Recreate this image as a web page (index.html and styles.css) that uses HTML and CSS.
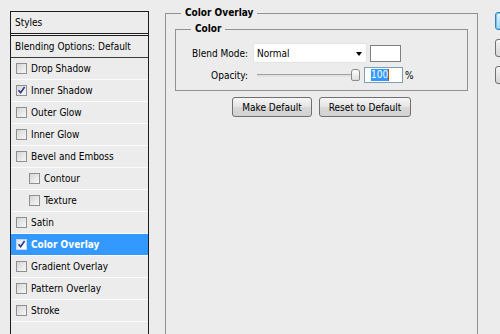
FILE: index.html
```html
<!DOCTYPE html>
<html>
<head>
<meta charset="utf-8">
<link rel="stylesheet" href="styles.css">
</head>
<body>
<div class="dialog">
  <div class="styles-panel">
    <div class="row head">Styles</div>
    <div class="row blend">Blending Options: Default</div>
    <div class="row"><span class="cb"></span><span class="lbl">Drop Shadow</span></div>
    <div class="row"><span class="cb checked"><svg viewBox="0 0 9 9" width="9" height="9"><path d="M1.5 4.2 L3.6 6.6 L7.6 1" fill="none" stroke="#2b3a8c" stroke-width="1.6"/></svg></span><span class="lbl">Inner Shadow</span></div>
    <div class="row"><span class="cb"></span><span class="lbl">Outer Glow</span></div>
    <div class="row"><span class="cb"></span><span class="lbl">Inner Glow</span></div>
    <div class="row"><span class="cb"></span><span class="lbl">Bevel and Emboss</span></div>
    <div class="row sub"><span class="cb"></span><span class="lbl">Contour</span></div>
    <div class="row sub"><span class="cb"></span><span class="lbl">Texture</span></div>
    <div class="row"><span class="cb"></span><span class="lbl">Satin</span></div>
    <div class="row active"><span class="cb checked"><svg viewBox="0 0 9 9" width="9" height="9"><path d="M1.5 4.2 L3.6 6.6 L7.6 1" fill="none" stroke="#2b3a8c" stroke-width="1.6"/></svg></span><span class="lbl">Color Overlay</span></div>
    <div class="row"><span class="cb"></span><span class="lbl">Gradient Overlay</span></div>
    <div class="row"><span class="cb"></span><span class="lbl">Pattern Overlay</span></div>
    <div class="row"><span class="cb"></span><span class="lbl">Stroke</span></div>
    <div class="row empty"></div>
  </div>

  <div class="main">
    <fieldset class="group outer">
      <legend>Color Overlay</legend>
      <fieldset class="group inner">
        <legend>Color</legend>
        <div class="field first">
          <label class="flabel">Blend Mode:</label>
          <div class="select"><span>Normal</span><span class="arrow"></span></div>
          <div class="swatch"></div>
        </div>
        <div class="field second">
          <label class="flabel">Opacity:</label>
          <div class="slider"><div class="track"></div><div class="thumb"></div></div>
          <div class="num"><span class="sel">100</span><span class="caret"></span></div>
          <span class="pct">%</span>
        </div>
      </fieldset>
      <div class="buttons">
        <button class="btn w1">Make Default</button>
        <button class="btn w2">Reset to Default</button>
      </div>
    </fieldset>
  </div>

  <div class="side">
    <div class="sbtn default"></div>
    <div class="sbtn"></div>
    <div class="sbtn"></div>
  </div>
</div>
</body>
</html>
```

FILE: styles.css
```css
html, body {
  margin: 0;
  padding: 0;
  background: #ececec;
}
body {
  font-family: "DejaVu Sans Condensed", "DejaVu Sans", "Liberation Sans", sans-serif;
  font-size: 10px;
  color: #000;
  width: 500px;
  height: 334px;
  overflow: hidden;
}
.dialog {
  display: flex;
  align-items: flex-start;
  height: 334px;
  overflow: hidden;
}

/* left styles list */
.styles-panel {
  margin-left: 10px;
  margin-top: 11px;
  width: 137px;
  height: 340px;
  border: 1px solid #1e1e1e;
  border-bottom: none;
  flex-shrink: 0;
}
.row {
  height: 21px;
  border-bottom: 1px solid #fbfbfb;
  display: flex;
  align-items: center;
  padding-left: 5px;
  white-space: nowrap;
}
.row.head {
  padding-left: 4px;
  border-bottom: 1px solid #1e1e1e;
  box-shadow: 0 1px 0 #f4f4f4, 0 2px 0 #1e1e1e;
  margin-bottom: 2px;
}
.row.blend {
  padding-left: 4px;
  border-bottom: 1px solid #3a3a3a;
}
.row.sub {
  padding-left: 18px;
}
.row.active {
  background: #3399ff;
  color: #fff;
  font-weight: bold;
}
.cb {
  width: 9px;
  height: 9px;
  border: 1px solid #8f8f8f;
  background: linear-gradient(135deg, #d6d6d6, #f7f7f7);
  margin-right: 4px;
  display: inline-flex;
  flex-shrink: 0;
}
.active .cb {
  border-color: #c8d4e8;
  background: linear-gradient(135deg, #dfe4ec, #ffffff);
}
.cb svg { display: block; }

/* main area */
.main {
  margin-left: 16px;
  width: 313px;
  flex-shrink: 0;
}
.group {
  margin: 0;
  min-width: 0;
  border: 1px solid #919191;
  box-sizing: border-box;
}
.group legend {
  font-weight: bold;
  line-height: 14px;
  padding: 0 4px;
}
.outer {
  margin-top: 6px;
  width: 313px;
  height: 360px;
  padding: 0 9px;
}
.outer > legend {
  margin-left: 6px;
}
.inner {
  margin-top: 2px;
  padding: 0 0 7px 0;
}
.inner > legend {
  margin-left: 15px;
}
.field {
  display: flex;
  align-items: center;
}
.field.first {
  margin-top: 7px;
  height: 20px;
}
.field.second {
  margin-top: 4px;
  height: 16px;
}
.flabel {
  width: 72px;
  text-align: right;
  flex-shrink: 0;
}
.select {
  margin-left: 5px;
  width: 114px;
  height: 20px;
  box-sizing: border-box;
  background: #fff;
  border: 1px solid #e4e4e4;
  border-radius: 2px;
  display: flex;
  align-items: center;
  padding-left: 3px;
  padding-right: 4px;
  justify-content: space-between;
}
.arrow {
  width: 0;
  height: 0;
  border-left: 3.5px solid transparent;
  border-right: 3.5px solid transparent;
  border-top: 4px solid #000;
  margin-top: 1px;
}
.swatch {
  margin-left: 3px;
  width: 31px;
  height: 17px;
  box-sizing: border-box;
  border: 1px solid #7f7f7f;
  background: #fff;
}
.slider {
  margin-left: 9px;
  width: 103px;
  display: flex;
  align-items: center;
  height: 16px;
}
.track {
  flex: 1;
  height: 2px;
  border-top: 1px solid #a0a0a0;
  background: #e2e2e2;
  margin-top: 1px;
}
.thumb {
  width: 9px;
  height: 12px;
  box-sizing: border-box;
  border: 1px solid #8a8a8a;
  border-radius: 3px 3px 2px 2px;
  background: linear-gradient(#ffffff, #dedede);
}
.num {
  margin-left: 4px;
  width: 39px;
  height: 16px;
  box-sizing: border-box;
  border: 1px solid #7f9db9;
  background: #fff;
  display: flex;
  align-items: center;
  padding-left: 6px;
}
.sel {
  background: #3399ff;
  color: #fff;
  line-height: 12px;
}
.caret {
  width: 1px;
  height: 12px;
  background: #b4520a;
}
.pct {
  margin-left: 2px;
}
.buttons {
  margin-top: 6px;
  display: flex;
  justify-content: center;
  gap: 7px;
}
.btn {
  font: inherit;
  color: #000;
  height: 20px;
  padding: 0;
  border: 1px solid #707070;
  border-radius: 3px;
  background: linear-gradient(#f6f6f6, #e4e4e4 50%, #d9d9d9 51%, #d2d2d2);
}
.w1 { width: 80px; }
.w2 { width: 92px; }

/* right buttons */
.side {
  margin-left: 17px;
  margin-top: 12px;
  display: flex;
  flex-direction: column;
  gap: 9px;
  flex-shrink: 0;
}
.sbtn {
  width: 75px;
  height: 18px;
  box-sizing: border-box;
  border: 1px solid #707070;
  border-radius: 3px;
  background: linear-gradient(#f6f6f6, #e4e4e4 50%, #d6d6d6);
}
.sbtn.default {
  border-color: #3c7fb1;
  background: linear-gradient(#e6f5fd, #bfe5fa 50%, #a5d7f6);
  box-shadow: inset 0 0 0 1px #6fc6f2;
}
```
